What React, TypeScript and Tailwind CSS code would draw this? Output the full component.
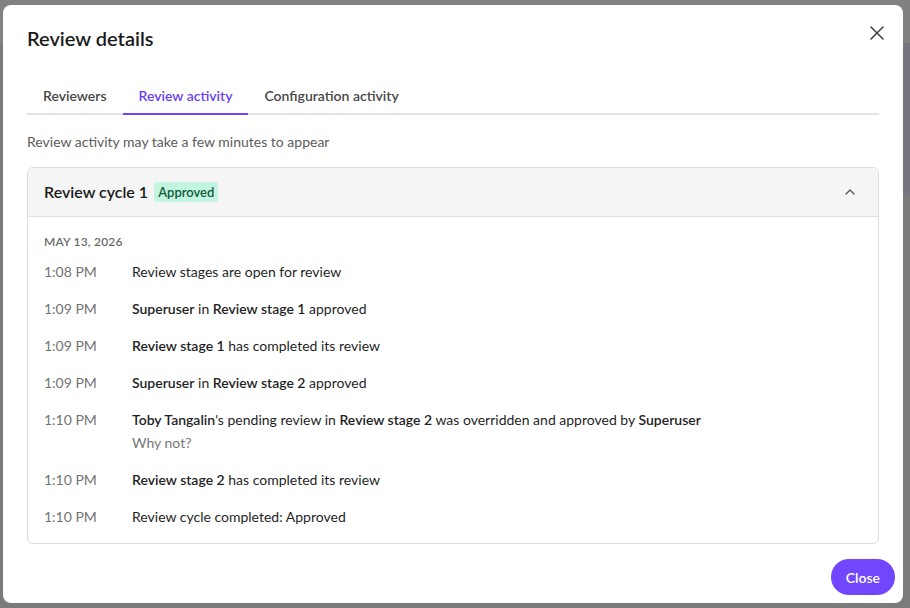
import * as React from "react";
import { X, ChevronUp } from "lucide-react";

type Part = { t: string; b?: boolean };

const rows: { time: string; parts: Part[]; note?: string }[] = [
  { time: "1:08 PM", parts: [{ t: "Review stages are open for review" }] },
  {
    time: "1:09 PM",
    parts: [{ t: "Superuser", b: true }, { t: " in " }, { t: "Review stage 1", b: true }, { t: " approved" }],
  },
  {
    time: "1:09 PM",
    parts: [{ t: "Review stage 1", b: true }, { t: " has completed its review" }],
  },
  {
    time: "1:09 PM",
    parts: [{ t: "Superuser", b: true }, { t: " in " }, { t: "Review stage 2", b: true }, { t: " approved" }],
  },
  {
    time: "1:10 PM",
    parts: [
      { t: "Toby Tangalin", b: true },
      { t: "'s pending review in " },
      { t: "Review stage 2", b: true },
      { t: " was overridden and approved by " },
      { t: "Superuser", b: true },
    ],
    note: "Why not?",
  },
  {
    time: "1:10 PM",
    parts: [{ t: "Review stage 2", b: true }, { t: " has completed its review" }],
  },
  { time: "1:10 PM", parts: [{ t: "Review cycle completed: Approved" }] },
];

const tabs = ["Reviewers", "Review activity", "Configuration activity"];

export default function App() {
  const [activeTab, setActiveTab] = React.useState(1);

  return (
    <div className="relative h-[608px] w-[910px] overflow-hidden bg-[#7b7b7b] font-['Lato','Liberation_Sans',sans-serif]">
      {/* dimmed page behind the dialog */}
      <div className="h-[43px] bg-[#818181]" />
      <div className="flex justify-end">
        <div className="h-[152px] w-[7px] bg-[#77747f]" />
      </div>

      <div className="absolute left-[3px] top-[5px] flex h-[598px] w-[900px] flex-col rounded-lg bg-white px-6 pb-[8px] pt-[20px]">
        <div className="flex items-start justify-between">
          <h2 className="text-[20px] font-semibold leading-[26px] text-[#1b1b1b]">Review details</h2>
          <button aria-label="Close dialog" className="-mr-[10px] -mt-[4px] text-[#444]">
            <X className="h-6 w-6" strokeWidth={1.6} />
          </button>
        </div>

        <nav className="mt-[35px] flex border-b-2 border-[#e3e3e3]">
          {tabs.map((tab, i) => (
            <button
              key={tab}
              onClick={() => setActiveTab(i)}
              className={
                i === activeTab
                  ? "-mb-[2px] border-b-2 border-[#6d45ff] px-4 pb-[7px] text-[14px] font-semibold leading-[20px] text-[#6a3ff5]"
                  : "-mb-[2px] border-b-2 border-transparent px-4 pb-[7px] text-[14px] font-semibold leading-[20px] text-[#474747]"
              }
            >
              {tab}
            </button>
          ))}
        </nav>

        <p className="mt-[17px] text-[14px] leading-[20px] text-[#5c5c5c]">
          Review activity may take a few minutes to appear
        </p>

        <section className="mt-[15px] overflow-hidden rounded-md border border-[#dcdcdc]">
          <header className="flex h-[49px] items-center justify-between border-b border-[#e2e2e2] bg-[#f5f5f5] pb-[1px] pl-4 pr-[20px]">
            <div className="flex items-center gap-[6px]">
              <span className="text-[16px] font-semibold text-[#1b1b1b]">Review cycle 1</span>
              <span className="rounded-[3px] bg-[#c2f4df] px-[4px] text-[13px] font-semibold leading-[20px] text-[#125a3c]">
                Approved
              </span>
            </div>
            <ChevronUp className="h-[16px] w-[16px] text-[#555]" strokeWidth={2} />
          </header>

          <div className="px-4 pb-[15px] pt-[17px]">
            <div className="text-[12px] font-semibold uppercase leading-[16px] tracking-[0.2px] text-[#6b6b6b]">
              May 13, 2026
            </div>
            <ul className="mt-[10px] flex flex-col gap-[14px]">
              {rows.map((row, i) => (
                <li key={i} className="flex text-[14px] leading-[23px]">
                  <span className="w-[88px] shrink-0 text-[#737373]">{row.time}</span>
                  <div className="text-[#1f1f1f]">
                    <div>
                      {row.parts.map((p, j) =>
                        p.b ? (
                          <strong key={j} className="font-semibold">
                            {p.t}
                          </strong>
                        ) : (
                          <span key={j}>{p.t}</span>
                        )
                      )}
                    </div>
                    {row.note && <div className="text-[#777]">{row.note}</div>}
                  </div>
                </li>
              ))}
            </ul>
          </div>
        </section>

        <div className="mt-auto flex justify-end">
          <button className="-mr-[16px] h-[36px] rounded-full bg-[#7146ff] px-[15px] text-[14px] font-semibold text-white">
            Close
          </button>
        </div>
      </div>
    </div>
  );
}
